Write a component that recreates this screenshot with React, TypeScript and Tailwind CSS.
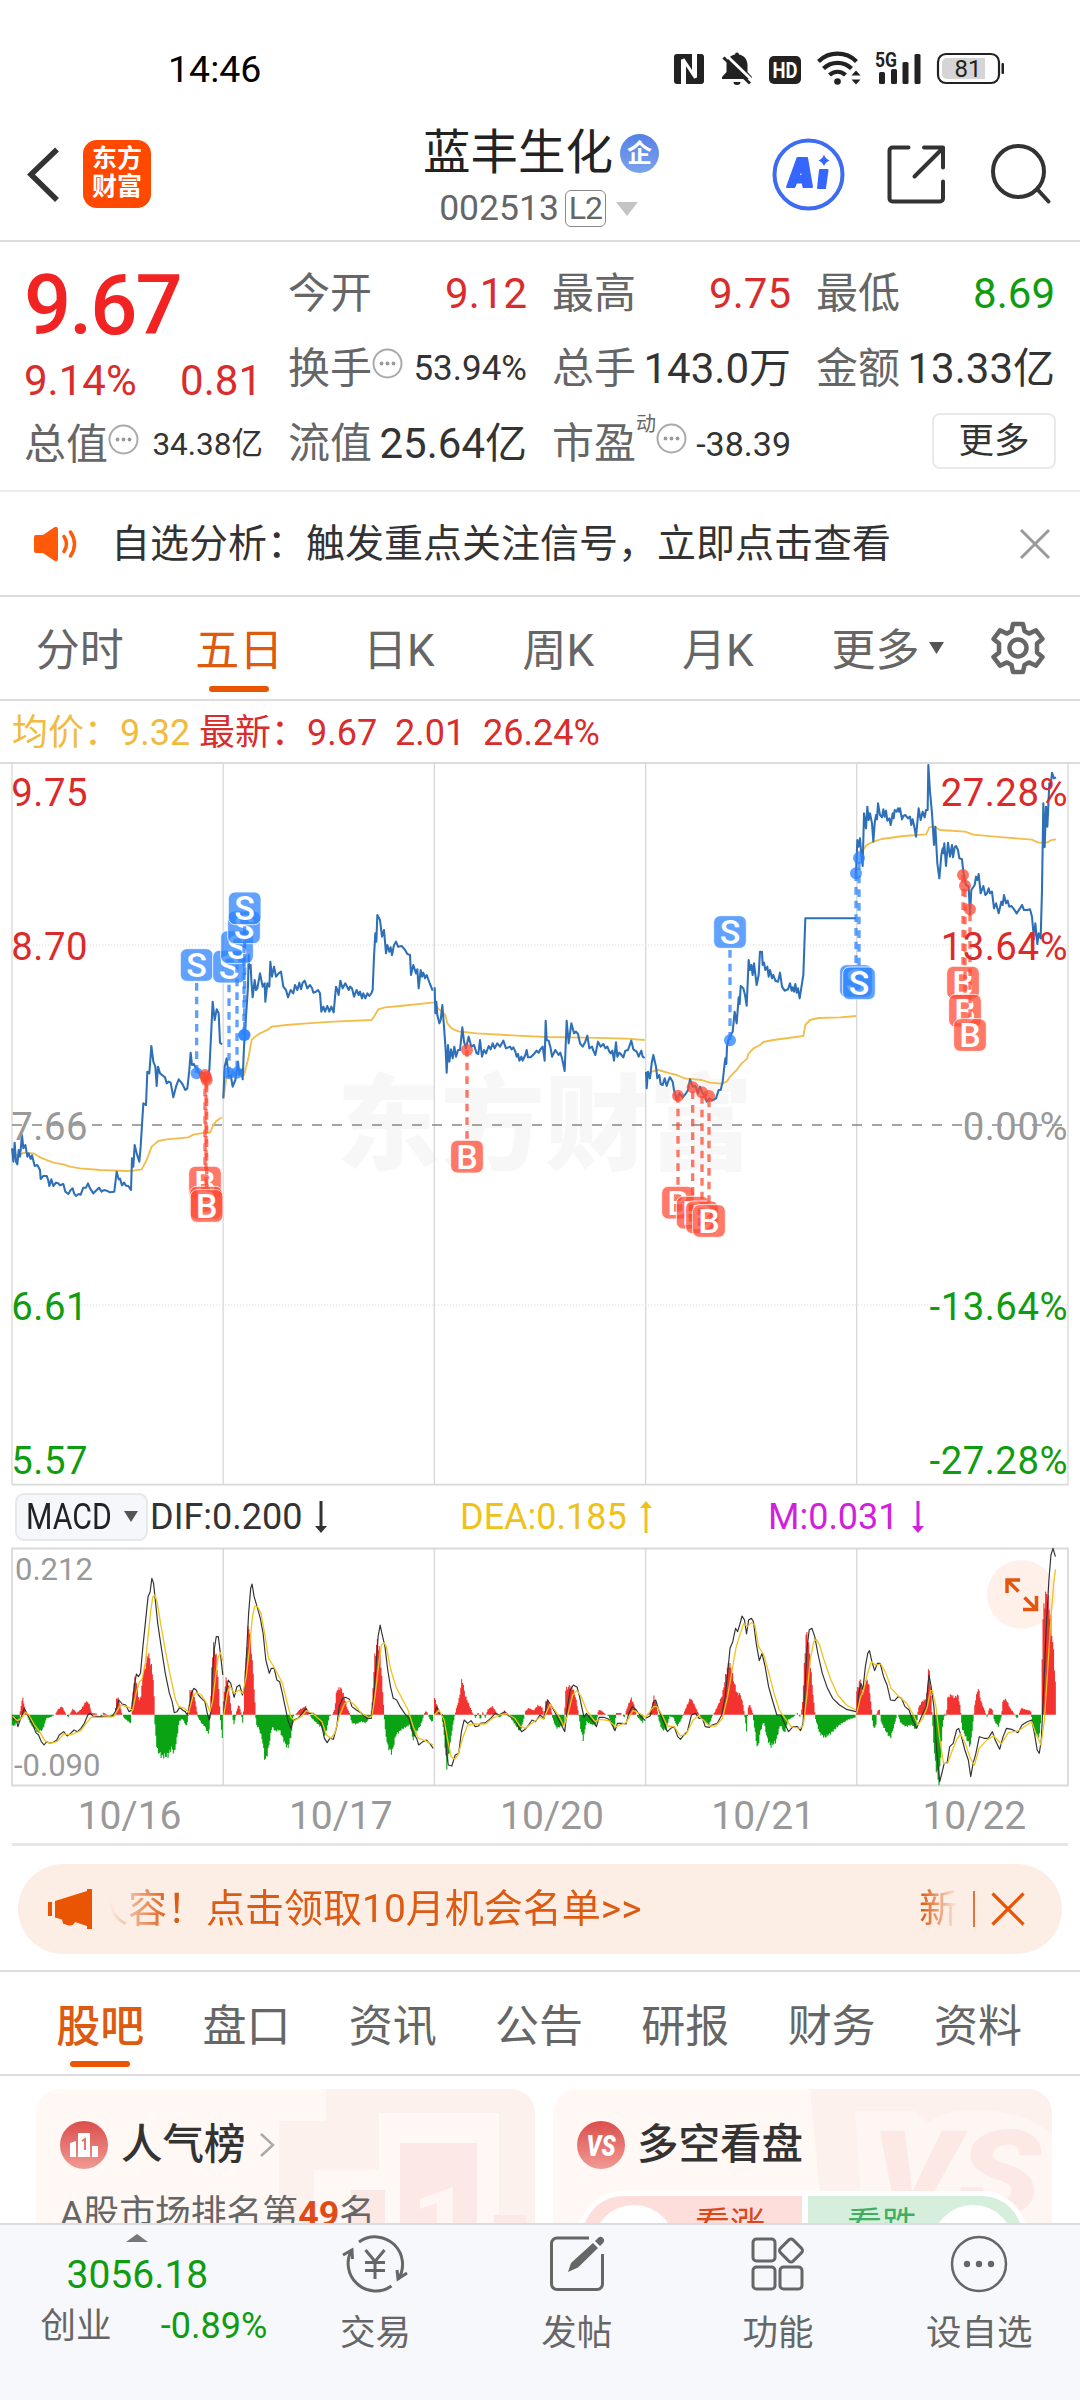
import type { ReactNode } from "react";
import clsx from "clsx";

type Point = [number, number];

// "x,y x,y ..." -> list of points
function parse(data: string): Point[] {
  return data
    .trim()
    .split(/\s+/)
    .map((p) => p.split(",").map(Number) as Point);
}

/* ---------------------------------- price chart data ---------------------------------- */

// One entry per trading day. Units are thirds of a pixel.
const PRICE_DAYS = [
  {
    dx: 0,
    dy: 0,
    price:
      "36,1165 40,1205 44,1148 48,1205 52,1213 56,1170 60,1190 66,1125 70,1165 76,1155 82,1190 86,1180 92,1197 96,1186 104,1218 112,1215 120,1230 122,1257 130,1248 140,1248 144,1258 148,1278 154,1258 160,1278 168,1268 175,1270 180,1276 190,1272 196,1295 205,1302 212,1290 218,1285 222,1300 228,1308 236,1302 242,1304 250,1283 258,1283 264,1270 270,1285 280,1300 290,1290 297,1283 305,1295 312,1290 320,1292 330,1297 343,1295 350,1235 356,1258 360,1256 366,1276 372,1268 378,1277 385,1278 393,1290 396,1195 400,1220 404,1155 410,1180 418,1205 422,1160 426,1095 430,1030 438,1035 442,935 448,940 454,858 460,905 466,920 470,978 474,920 480,940 490,948 495,952 500,970 506,965 512,968 520,1012 528,980 536,958 546,970 556,990 562,985 568,930 572,878 576,915 582,912 586,922 592,925 600,945 606,938 612,940 620,960 628,930 633,830 638,725 644,780 650,748 656,760 660,848 666,853",
    avg: "36,1185 60,1185 70,1178 100,1180 120,1192 135,1198 160,1208 190,1213 210,1220 240,1225 300,1230 380,1233 400,1232 425,1228 440,1200 455,1160 475,1143 500,1138 565,1132 580,1124 615,1118 630,1118 640,1095 650,1082 666,1072",
  },
  {
    dx: 0,
    dy: 0,
    price:
      "670,1015 674,920 680,895 686,950 692,945 698,980 706,960 714,905 718,945 724,930 728,958 732,860 738,770 744,680 746,585 748,625 752,615 754,660 758,712 764,660 768,690 772,685 780,640 788,680 794,670 796,725 802,670 808,680 811,605 816,650 822,620 828,650 836,640 843,635 850,680 858,690 864,712 872,690 880,700 885,675 892,690 898,668 903,688 908,668 914,662 922,685 930,675 936,684 940,698 948,695 954,690 960,700 964,755 970,740 975,755 982,738 988,755 994,740 1001,757 1008,680 1012,690 1016,705 1021,662 1028,685 1036,670 1046,690 1050,680 1056,685 1062,710 1070,690 1076,705 1080,695 1086,715 1090,700 1096,715 1102,700 1108,708 1114,700 1118,690 1122,590 1126,520 1129,545 1132,465 1140,480 1146,530 1152,510 1158,580 1162,555 1168,575 1172,562 1176,585 1182,555 1188,545 1194,560 1205,558 1214,568 1222,582 1230,585 1233,645 1240,615 1248,640 1252,628 1256,685 1262,630 1266,650 1270,638 1275,655 1280,645 1290,672 1298,692",
    avg: "670,1015 680,950 700,940 732,945 745,895 755,840 765,830 780,820 805,808 815,800 860,795 920,790 1000,785 1115,780 1125,765 1135,748 1155,742 1200,738 1303,727",
  },
  {
    dx: 1080,
    dy: 300,
    price:
      "224,382 226,460 229,425 232,465 238,490 242,480 247,435 252,500 257,570 260,638 264,555 268,605 273,568 278,595 283,560 288,590 294,570 300,570 307,502 312,545 318,565 326,530 334,560 342,555 350,580 355,582 360,540 366,590 372,570 378,580 386,558 392,568 398,550 404,565 412,550 420,560 430,542 438,565 450,560 455,568 460,562 466,575 470,590 474,582 478,602 484,590 488,602 496,585 500,570 504,592 512,592 522,582 530,572 536,578 540,570 548,560 554,602 557,482 560,540 566,542 572,565 576,590 586,570 596,585 601,578 606,595 614,633 620,482 626,550 634,490 642,520 648,515 654,522 660,550 668,560 676,545 682,527 688,565 696,560 700,572 706,585 714,545 722,560 730,552 736,565 742,560 748,575 752,580 757,572 762,602 768,547 772,590 778,578 782,582 790,592 796,572 804,570 814,542 820,568 830,575 836,590 844,572 848,590 854,594",
    avg: "224,425 234,445 256,465 262,490 275,505 295,514 350,520 470,527 560,531 680,533 800,536 854,540",
  },
  {
    dx: 1080,
    dy: 300,
    price:
      "858,635 860,685 864,635 870,655 875,610 880,585 888,620 892,655 898,645 902,672 908,675 914,655 920,678 926,660 930,652 938,665 942,690 950,720 958,700 968,712 978,700 984,690 990,658 998,680 1006,678 1014,700 1020,680 1028,700 1034,705 1040,725 1048,715 1056,722 1068,715 1076,690 1082,690 1088,665 1094,610 1096,595 1099,612 1101,560 1104,545 1112,525 1118,515 1124,455 1130,490 1136,412 1139,432 1142,378 1150,385 1155,405 1160,437 1166,300 1170,330 1174,315 1178,345 1182,310 1190,375 1196,345 1200,275 1206,275 1208,315 1212,308 1216,330 1222,320 1226,350 1230,330 1236,355 1240,345 1246,362 1254,365 1260,338 1266,380 1274,392 1284,388 1290,370 1295,392 1298,382 1302,395 1306,372 1310,398 1314,385 1319,415 1326,370 1330,345 1336,175 1488,175",
    avg: "858,660 875,635 895,630 930,640 950,645 975,655 1025,660 1050,668 1085,671 1100,665 1110,650 1130,630 1145,610 1162,595 1165,582 1180,565 1200,555 1210,546 1240,540 1330,528 1336,495 1350,480 1375,474 1440,472 1488,468",
  },
  {
    dx: 1920,
    dy: 0,
    price:
      "648,340 652,240 656,260 660,235 664,285 668,318 672,160 678,205 682,140 686,180 690,160 696,190 700,245 704,190 708,165 711,178 714,130 720,165 726,172 730,148 734,170 738,152 742,182 748,175 752,195 758,160 761,175 764,150 770,155 774,145 777,155 780,145 786,178 790,168 796,165 804,175 810,170 814,195 818,178 822,195 828,230 836,145 842,180 848,155 854,172 858,150 863,150 865,15 870,95 876,160 882,255 886,200 892,310 898,355 904,285 908,265 910,280 913,250 918,318 924,248 930,290 936,255 939,292 944,262 948,258 954,270 958,295 966,298 970,335 978,375 986,380 990,465 994,390 1004,375 1008,350 1012,360 1016,342 1022,400 1030,378 1036,405 1041,400 1046,385 1050,400 1056,395 1062,445 1068,430 1076,460 1084,425 1088,435 1092,405 1098,430 1103,422 1108,440 1114,438 1120,445 1130,460 1140,445 1146,435 1152,450 1162,450 1170,448 1176,470 1182,538 1186,490 1192,552 1196,520 1202,535 1206,390 1210,130 1214,262 1218,140 1222,200 1228,70 1232,80 1236,38 1242,55 1248,52",
    avg: "648,275 665,275 680,255 700,245 725,237 790,228 858,223 868,203 880,198 900,210 975,215 1000,224 1090,232 1175,239 1195,248 1220,248 1235,240 1248,238",
  },
];

type Trade = { side: "S" | "B"; x: number; box: number; dot: number };

const TRADES: Trade[] = [
  { side: "S", x: 590, box: 615, dot: 940 },
  { side: "S", x: 687, box: 620, dot: 940 },
  { side: "S", x: 711, box: 561, dot: 938 },
  { side: "S", x: 732, box: 502, dot: 825 },
  { side: "S", x: 734, box: 445, dot: 825 },
  { side: "B", x: 615, box: 1268, dot: 945 },
  { side: "B", x: 618, box: 1328, dot: 952 },
  { side: "B", x: 620, box: 1338, dot: 960 },
  { side: "B", x: 1401, box: 1190, dot: 870 },
  { side: "S", x: 2190, box: 516, dot: 841 },
  { side: "B", x: 2034, box: 1328, dot: 1007 },
  { side: "B", x: 2078, box: 1358, dot: 982 },
  { side: "B", x: 2106, box: 1372, dot: 997 },
  { side: "B", x: 2127, box: 1383, dot: 1008 },
  { side: "S", x: 2568, box: 663, dot: 340 },
  { side: "S", x: 2577, box: 670, dot: 294 },
  { side: "B", x: 2889, box: 668, dot: 345 },
  { side: "B", x: 2895, box: 752, dot: 377 },
  { side: "B", x: 2910, box: 825, dot: 448 },
];

const DAY_LINES = [36, 669.5, 1303, 1937, 2570, 3204];

/* ---------------------------------- MACD data ---------------------------------- */

const MACD_DAYS = [
  {
    dx: 0,
    dif: "36,705 40,720 46,712 52,740 58,722 64,705 70,685 78,700 86,715 96,735 104,758 112,765 120,785 128,795 136,785 145,790 155,787 165,780 172,765 185,755 195,768 205,760 215,750 225,755 235,745 245,730 255,705 262,700 270,708 290,710 310,708 325,710 335,695 345,660 355,672 365,675 375,695 382,690 390,620 396,582 402,590 408,580 415,500 422,430 430,350 436,335 441,295 446,310 450,350 458,430 468,500 480,580 492,640 500,665 506,698 514,695 522,682 530,690 538,695 544,705 550,680 556,640 563,625 570,630 576,645 585,655 595,665 602,700 608,720 613,690 617,580 622,510 628,470 634,470 640,520 647,585",
    dea: "36,708 50,722 62,715 74,697 84,705 100,735 115,755 130,782 145,790 165,785 185,762 205,765 235,752 250,730 265,712 290,712 330,710 350,675 375,682 385,692 395,640 405,605 412,600 422,550 430,470 438,390 444,350 450,345 456,365 468,440 480,510 495,590 510,660 520,680 535,685 548,697 560,650 570,638 585,645 600,670 610,695 618,660 626,590 634,530 640,518 647,542",
    hist: "36,-30 42,-35 48,-20 55,-25 60,20 66,52 72,20 80,-5 90,-30 100,-40 112,-55 125,-42 135,-10 145,-8 160,0 168,15 180,25 190,5 198,-8 205,5 212,18 222,5 235,15 250,40 258,35 266,5 280,3 295,-4 300,6 312,0 325,-4 334,-5 338,50 345,48 352,10 360,-10 372,-20 380,-25 384,40 390,110 396,100 404,40 410,60 416,130 424,150 430,185 438,155 446,100 450,-30 456,-105 470,-125 488,-122 498,-100 506,-115 514,-70 520,-20 530,-12 542,-35 547,0 552,75 560,70 568,35 574,-5 585,-25 595,-35 606,-60 611,0 616,170 621,210 628,170 634,100 640,-10 647,-90",
  },
  {
    dx: 0,
    dif: "650,700 656,640 663,600 670,610 680,652 688,620 696,615 704,645 710,625 716,520 722,400 728,325 732,312 738,350 748,385 756,415 764,460 772,540 782,580 788,565 796,565 804,600 812,605 820,640 828,680 836,720 845,745 852,720 865,715 878,700 888,685 898,700 910,700 925,715 935,740 942,775 950,788 958,775 968,778 978,740 985,680 995,655 1003,652 1015,658 1022,680 1035,690 1050,700 1065,715 1078,715 1085,650 1092,560 1098,470 1104,435 1110,465 1118,500 1126,570 1134,620 1142,655 1152,660 1162,680 1175,700 1188,715 1200,760 1210,775 1216,795 1228,785 1238,780 1248,790 1258,805",
    dea: "650,705 660,640 668,618 680,640 695,630 705,640 715,590 725,500 733,410 740,378 748,380 758,400 770,470 780,535 792,555 808,585 820,610 832,660 845,712 855,722 875,710 890,692 910,702 935,725 948,765 960,775 972,760 985,710 1000,672 1015,662 1030,675 1050,700 1070,712 1080,710 1090,640 1100,550 1108,495 1115,488 1122,500 1135,570 1150,620 1165,650 1185,690 1200,740 1215,775 1235,782 1258,795",
    hist: "649,40 656,110 664,85 672,10 680,-30 688,15 694,30 700,5 706,-30 710,80 716,190 722,275 730,200 738,80 744,-30 752,-40 762,-75 770,-140 778,-110 790,-35 800,-50 812,-45 825,-80 836,-100 846,-60 852,-5 862,5 870,15 888,25 896,5 905,-10 920,-25 935,-40 942,-65 950,-40 956,-5 965,0 972,15 978,75 990,80 998,60 1008,20 1015,5 1022,-25 1035,-28 1050,-20 1062,-25 1075,-8 1080,20 1088,170 1096,220 1104,180 1112,60 1118,-40 1126,-95 1138,-115 1150,-60 1165,-45 1190,-30 1200,-75 1210,-50 1222,-30 1230,-5 1235,10 1240,8 1245,-5 1252,-20 1258,-18",
  },
  {
    dx: 0,
    dif: "1262,700 1268,680 1276,700 1285,705 1292,740 1297,820 1302,855 1312,858 1322,825 1332,820 1340,755 1348,720 1358,730 1368,722 1380,740 1390,738 1395,730 1410,728 1425,715 1438,700 1450,705 1465,695 1478,708 1495,715 1505,740 1515,755 1525,748 1535,735 1545,720 1555,725 1568,705 1580,715 1590,660 1600,675 1613,700 1628,730 1640,755 1648,680 1656,630 1665,615 1676,622 1683,650 1696,712 1703,700 1713,715 1723,725 1732,740 1740,712 1753,712 1768,718 1778,735 1786,752 1793,730 1808,730 1818,732 1826,700 1836,680 1848,690 1860,708 1874,722",
    dea: "1262,705 1275,690 1290,720 1300,780 1310,830 1320,838 1330,825 1345,770 1358,735 1380,732 1410,732 1430,715 1450,705 1470,700 1495,715 1510,738 1525,745 1545,730 1568,712 1578,718 1598,672 1618,700 1638,738 1650,700 1663,645 1676,632 1688,650 1703,690 1728,725 1743,718 1768,722 1788,740 1818,728 1838,692 1858,700 1874,712",
    hist: "1262,50 1270,25 1276,10 1283,-5 1290,-60 1297,-160 1305,-110 1312,-50 1320,-5 1326,20 1334,50 1342,110 1350,60 1362,30 1372,5 1382,-10 1388,8 1395,-15 1402,8 1410,-10 1416,15 1430,25 1440,10 1448,-8 1456,-5 1465,12 1472,5 1480,-5 1490,-20 1500,-35 1510,-50 1518,-25 1526,10 1535,20 1550,12 1562,28 1568,25 1576,20 1580,-20 1584,40 1592,45 1600,20 1606,-15 1616,-40 1628,-35 1638,-30 1643,75 1653,85 1663,80 1672,50 1680,5 1686,-40 1694,-75 1703,-20 1718,-30 1731,-30 1738,15 1746,12 1754,5 1768,-5 1783,-45 1790,5 1803,5 1813,-8 1823,25 1833,50 1843,25 1850,-5 1868,-25",
  },
  {
    dx: 1568,
    dif: "307,715 320,708 330,665 336,660 345,690 355,715 370,755 380,745 390,740 400,770 408,778 418,765 428,755 440,705 452,700 462,715 472,715 480,740 492,742 500,735 515,730 528,705 538,650 545,580 552,505 560,485 568,445 574,455 580,435 587,408 594,420 600,462 606,420 614,415 620,425 628,490 637,542 645,520 654,560 664,620 675,660 688,705 700,705 710,730 722,755 735,740 748,740 757,752 764,730 770,620 776,500 782,450 790,445 798,470 808,525 820,580 835,625 850,655 870,675 890,688 918,695",
    dea: "307,712 330,680 340,680 355,705 370,738 390,740 408,768 425,762 445,720 460,708 475,720 492,738 510,738 530,715 545,650 558,570 570,500 582,460 592,430 602,440 614,428 624,435 635,500 650,525 665,580 680,640 695,690 712,715 730,740 755,745 765,735 775,650 785,540 795,485 803,478 812,495 825,540 845,600 865,645 890,675 918,690",
    hist: "308,0 318,5 325,20 331,55 338,30 345,-15 355,-45 366,-45 376,-5 388,-8 398,-35 410,-15 418,5 426,25 437,50 446,35 455,15 465,-5 480,-25 492,-30 500,-5 508,8 518,30 530,60 540,120 548,155 555,140 562,105 572,65 582,60 590,30 596,-15 600,-50 604,20 610,30 618,5 622,-30 632,-105 640,-50 650,-20 660,-70 670,-95 685,-80 698,-30 710,-55 722,-15 738,-5 748,5 756,-8 762,25 768,150 773,245 780,215 788,120 796,30 800,-10 812,-55 828,-68 845,-55 870,-30 895,-15 916,-8",
  },
  {
    dx: 1568,
    dif: "920,700 926,640 932,610 938,628 945,560 952,520 957,512 964,545 972,572 980,550 988,550 998,590 1008,615 1018,660 1030,662 1040,650 1050,655 1060,680 1072,690 1082,720 1094,745 1102,725 1112,700 1122,680 1126,620 1130,585 1136,620 1144,680 1150,780 1156,860 1161,905 1166,885 1174,850 1182,850 1190,800 1200,790 1210,750 1216,745 1224,770 1234,810 1244,840 1251,890 1258,850 1266,820 1276,770 1290,775 1302,775 1314,755 1322,780 1335,808 1345,770 1355,745 1370,748 1388,758 1400,735 1415,725 1428,720 1436,760 1444,810 1450,820 1456,780 1464,600 1470,450 1478,300 1484,225 1490,205 1497,230",
    dea: "920,700 930,655 940,630 950,585 962,545 975,555 990,552 1005,580 1020,625 1045,652 1065,670 1085,705 1098,735 1112,715 1125,680 1134,632 1140,632 1150,680 1160,770 1172,850 1184,850 1198,810 1212,775 1222,762 1235,790 1250,835 1262,855 1275,805 1300,778 1318,768 1340,792 1360,758 1390,752 1410,738 1428,725 1440,760 1455,795 1465,720 1475,560 1485,400 1492,310 1497,268",
    hist: "920,70 930,105 938,60 946,100 954,100 962,30 967,-35 975,-40 979,10 986,15 992,-25 1005,-50 1018,-70 1028,-35 1038,5 1048,-25 1062,-35 1080,-30 1092,-45 1099,20 1110,40 1120,45 1125,70 1129,150 1135,70 1140,-20 1146,-120 1152,-170 1159,-205 1164,-120 1170,-20 1177,5 1180,-8 1184,50 1194,60 1204,50 1214,60 1221,20 1226,-40 1238,-70 1250,-95 1257,-30 1264,40 1273,80 1281,40 1290,15 1298,-8 1306,20 1314,15 1320,-20 1332,-35 1340,-5 1345,45 1354,45 1365,20 1376,5 1386,-12 1398,20 1410,15 1425,12 1431,-25 1440,-60 1450,-65 1456,0 1460,280 1468,360 1476,340 1484,280 1492,180 1498,70",
  },
];

const MACD_ZERO = 704;
const BAR_STEP = 2.54;

// Interpolates the histogram keys into one bar per minute
function barPath(hist: string, positive: boolean) {
  const keys = parse(hist);
  let d = "";
  let k = 0;
  let i = 0;
  for (let x = keys[0][0]; x <= keys[keys.length - 1][0]; x += BAR_STEP) {
    while (k < keys.length - 2 && keys[k + 1][0] < x) k++;
    const [x0, v0] = keys[k];
    const [x1, v1] = keys[k + 1];
    const wobble = 1 + Math.sin(i * 2.3) * 0.07;
    const v = (v0 + ((v1 - v0) * (x - x0)) / (x1 - x0)) * wobble;
    i++;
    if (v > 0 !== positive || Math.abs(v) < 2) continue;
    d += `M${x.toFixed(1)} ${MACD_ZERO}V${(MACD_ZERO - v).toFixed(1)}`;
  }
  return d;
}

/* ---------------------------------- components ---------------------------------- */

function StatusBar() {
  return (
    <div className="flex h-[116px] items-start justify-between pl-[168px] pr-[74px] pt-[50px]">
      <span className="text-[37.500px] leading-[38px] text-black">14:46</span>
      <svg className="h-[36px] w-[334px]" viewBox="672 50 334 36" fill="#222">
        {/* NFC */}
        <rect x="674" y="54" width="30" height="30" rx="3" />
        <path d="M681 84V59.500h2.500L686 63v21zM697 54v23.500h-2.500L692 74V54z" fill="#fff" />
        <path d="M683 59l12.500 19" stroke="#fff" strokeWidth="3" />
        {/* muted bell */}
        <path d="M737 52.500a2 2 0 0 1 2 2c5 1 8.500 5 8.500 10.500v7l4.500 5v2h-30v-2l4.500-5v-7c0-5.500 3.500-9.500 8.500-10.500a2 2 0 0 1 2-2zM733.500 82h7a3.500 3 0 0 1-7 0z" />
        <path d="M726 55l28 27" stroke="#fff" strokeWidth="3" />
        <path d="M723.500 57.500l26.500 26" stroke="#222" strokeWidth="3" />
        {/* HD */}
        <rect x="769" y="56" width="32" height="28" rx="5" />
        <text x="785" y="78" fontSize="22" fontWeight="700" textAnchor="middle" fill="#fff" textLength="25" lengthAdjust="spacingAndGlyphs">
          HD
        </text>
        {/* wifi */}
        <g fill="none" stroke="#222" strokeWidth="4.200">
          <path d="M818.500 61.500a27 27 0 0 1 38 0" />
          <path d="M823.500 68.500a20 20 0 0 1 28 0" />
          <path d="M829.500 75a11.500 11.500 0 0 1 16 0" />
        </g>
        <circle cx="837.500" cy="81.500" r="3.300" />
        <path d="M851.500 75.500l4.500-5 4.500 5zM851.500 79.500l4.500 5 4.500-5z" />
        {/* 5G bars */}
        <text x="875" y="66.500" fontSize="20.500" fontWeight="700" textLength="22" lengthAdjust="spacingAndGlyphs">
          5G
        </text>
        <rect x="879" y="72" width="6" height="12" rx="1.500" />
        <rect x="891" y="69" width="6" height="15" rx="1.500" />
        <rect x="902.500" y="62" width="6" height="22" rx="1.500" />
        <rect x="914.500" y="54" width="6" height="30" rx="1.500" />
        {/* battery */}
        <rect x="938" y="54" width="61" height="29" rx="8" fill="#fff" stroke="#222" strokeWidth="2.200" />
        <path d="M947 58h38v21h-38a5 5 0 0 1-5-5V63a5 5 0 0 1 5-5z" fill="#d5d5d5" />
        <rect x="1001.500" y="63" width="2.500" height="11" rx="1" />
        <text x="968" y="77" fontSize="24" textAnchor="middle">
          81
        </text>
      </svg>
    </div>
  );
}

function Header() {
  return (
    <header className="flex h-[126px] items-start border-b-2 border-[#dcdcdc]">
      <div className="flex w-[380px] items-center pl-[24px] pt-[24px]">
        <svg className="h-[68px] w-[40px]" viewBox="24 140 40 68" fill="none" stroke="#333" strokeWidth="5.500">
          <path d="M57 149.500L31 174.500l26 25.500" />
        </svg>
        <div className="ml-[19px] flex size-[68px] flex-col items-center justify-center rounded-[14px] bg-[#ff4800] pb-[2px] text-[25px] font-bold leading-[28px] text-white">
          <span>东方</span>
          <span>财富</span>
        </div>
      </div>

      <div className="flex w-[322px] flex-col items-center pt-[8px]">
        <div className="flex items-center">
          <span className="text-[47.500px] leading-[58px] text-[#222]">蓝丰生化</span>
          <span className="ml-[7px] flex size-[39px] items-center justify-center rounded-full bg-linear-to-b from-[#5681e6] to-[#7ba3ea] text-[25px] font-bold leading-none text-white">
            企
          </span>
        </div>
        <div className="mt-[8px] flex items-center text-[35.500px] leading-[37px] text-[#666]">
          002513
          <span className="ml-[6px] flex h-[37px] w-[41px] items-center justify-center rounded-[6px] border-[1.500px] border-[#888] text-[32px] tracking-[-1px]">
            L2
          </span>
          <svg className="ml-[9px] mr-[4px] h-[14px] w-[24px]" viewBox="0 0 24 14">
            <path d="M1 0h22L12 14z" fill="#c4c4c4" />
          </svg>
        </div>
      </div>

      <svg className="ml-[66px] mt-[20px] h-[76px] w-[290px]" viewBox="768 136 290 76" fill="none" stroke="#333" strokeWidth="4" strokeLinecap="round" strokeLinejoin="round">
        {/* AI assistant */}
        <circle cx="808.500" cy="174.500" r="34" stroke="#3d6bf2" />
        <g fill="#3566ff" stroke="#3566ff" strokeWidth="2" fillRule="evenodd">
          <path d="M787 187l10.500-29h9.500l5 29h-8.500l-.8-4.500h-6.500l-1.700 4.500zM798.500 176h4l-.8-7.500z" />
          <path d="M820 170h7.500l-2.500 18h-7z" />
        </g>
        <path d="M824 154.500q1.500 4.500 5.500 6q-4 1.500-5.500 5.500q-1.500-4-5.500-5.500q4-1.500 5.500-6z" fill="#3566ff" stroke="none" />
        {/* share */}
        <path d="M908.500 147.500h-16a3 3 0 0 0-3 3v48a3 3 0 0 0 3 3h47.500a3 3 0 0 0 3-3v-17M924 147.500h19v20M942 149l-27.500 27.500" />
        {/* search */}
        <circle cx="1018.500" cy="171.500" r="25.500" />
        <path d="M1038 190l10.500 11.500" />
      </svg>
    </header>
  );
}

function InfoDot() {
  return (
    <svg className="h-[31px] w-[31px] shrink-0 -translate-y-[5px]" viewBox="0 0 31 31" fill="#999">
      <circle cx="15.500" cy="15.500" r="14" fill="none" stroke="#aaa" strokeWidth="2" />
      <circle cx="9.500" cy="15.500" r="1.900" />
      <circle cx="15.500" cy="15.500" r="1.900" />
      <circle cx="21.500" cy="15.500" r="1.900" />
    </svg>
  );
}

function Cell({ label, value, info, tone = "text-[#333]", size = "text-[42px]", sup }: {
  label: string;
  value: string;
  info?: boolean;
  tone?: string;
  size?: string;
  sup?: string;
}) {
  return (
    <div className="flex h-[75px] items-center justify-between whitespace-nowrap leading-[50px]">
      <span className="flex items-center text-[42px] text-[#666]">
        {label}
        {sup && <span className="w-[20px] -translate-y-[20px] text-[20px]">{sup}</span>}
        {info && <InfoDot />}
      </span>
      <span className={clsx(size, tone)}>{value}</span>
    </div>
  );
}

function Quote() {
  return (
    <section className="grid h-[250px] grid-cols-[239px_239px_239px_239px] gap-x-[25px] border-b-2 border-[#ececec] pl-[24px] pt-[14px]">
      <div>
        <div className="flex h-[99px] items-center text-[83px] font-medium leading-none tracking-[-2px] text-[#f12323]">9.67</div>
        <div className="flex h-[52px] items-center justify-between pr-[1px] text-[42px] leading-none text-[#d92c2c]">
          <span>9.14%</span>
          <span>0.81</span>
        </div>
        <Cell label="总值" value="34.38亿" info size="text-[31.500px]" />
      </div>
      <div>
        <Cell label="今开" value="9.12" tone="text-[#d92c2c]" />
        <Cell label="换手" value="53.94%" info size="text-[35px]" />
        <Cell label="流值" value="25.64亿" />
      </div>
      <div>
        <Cell label="最高" value="9.75" tone="text-[#d92c2c]" />
        <Cell label="总手" value="143.0万" />
        <Cell label="市盈" value="-38.39" sup="动" info size="text-[34px]" />
      </div>
      <div>
        <Cell label="最低" value="8.69" tone="text-[#109c10]" />
        <Cell label="金额" value="13.33亿" />
        <div className="flex h-[75px] items-center justify-end">
          <button className="mr-[-1px] mt-[-6px] h-[56px] w-[124px] rounded-[8px] border-2 border-[#e9e9e9] text-[35.500px] leading-[50px] text-[#333]">
            更多
          </button>
        </div>
      </div>
    </section>
  );
}

function Notice() {
  return (
    <div className="flex h-[105px] items-center border-b-2 border-[#dcdcdc] pl-[33px] pr-[29px]">
      <svg className="h-[36px] w-[46px]" viewBox="0 0 46 36">
        <path d="M1 11q0-2 2-2h7L21 1.500q4-2 4 2v29q0 4-4 2L10 27H3q-2 0-2-2z" fill="#ff5a0a" />
        <path d="M31 10.500q5 7.500 0 15" fill="none" stroke="#ff5a0a" strokeWidth="3.500" strokeLinecap="round" />
        <path d="M37.500 6q8 12 0 24" fill="none" stroke="#ff5a0a" strokeWidth="3.500" strokeLinecap="round" />
      </svg>
      <span className="ml-[32px] whitespace-nowrap text-[39px] leading-[50px] text-[#333]">
        自选分析：触发重点关注信号，立即点击查看
      </span>
      <svg className="ml-auto h-[32px] w-[32px]" viewBox="0 0 32 32" fill="none" stroke="#999" strokeWidth="3">
        <path d="M2 2l28 28M30 2L2 30" />
      </svg>
    </div>
  );
}

function ChartTabs() {
  const tabs = ["分时", "五日", "日K", "周K", "月K"];
  return (
    <nav className="flex h-[104px] border-b-2 border-[#dcdcdc] text-[44px] text-[#666]">
      {tabs.map((tab) => (
        <div key={tab} className="flex w-[159.500px] flex-col items-center pt-[22px]">
          <span className={clsx("leading-[64px]", tab === "五日" && "text-[#dd5a0e]")}>{tab}</span>
          {tab === "五日" && <span className="mt-[3px] h-[6px] w-[60px] rounded-full bg-[#ea5504]" />}
        </div>
      ))}
      <div className="flex items-start pl-[34px] pt-[22px]">
        <span className="leading-[64px]">更多</span>
        <svg className="ml-[9px] mt-[23px] h-[12px] w-[15px]" viewBox="0 0 15 12">
          <path d="M0 0h15L7.500 12z" fill="#555" />
        </svg>
      </div>
      <svg className="ml-auto mr-[34px] mt-[24px] h-[54px] w-[56px]" viewBox="-28 -27 56 54" fill="none" stroke="#666" strokeWidth="4.500" strokeLinejoin="round">
        <path d="M-5-24h10l1.500 7 4.500 2.600 7-3.300 6.500 8.700-5.500 4.500v9l5.500 4.500-6.500 8.700-7-3.300L6.500 17 5 24H-5l-1.500-7-4.500-2.600-7 3.300-6.500-8.700 5.500-4.500v-9l-5.500-4.500 6.500-8.700 7 3.300 4.500-2.600z" />
        <circle r="8.500" />
      </svg>
    </nav>
  );
}

function Legend() {
  return (
    <div className="flex h-[63px] items-center whitespace-nowrap border-b-2 border-[#dcdcdc] pl-[12px] pt-[3px] text-[36px] text-[#d92c2c]">
      <span className="text-[#f0bb3f]">均价：</span>
      <span className="w-[79px] text-[#f0bb3f]">9.32</span>
      <span>最新：</span>
      <span className="w-[88px]">9.67</span>
      <span className="w-[88px]">2.01</span>
      <span>26.24%</span>
    </div>
  );
}

function TradeMark({ side, x, box, dot }: Trade) {
  const color = side === "S" ? "#2a81ff" : "#ff4a34";
  const edge = box < dot ? box + 54 : box - 54;
  return (
    <g>
      <path d={`M${x} ${edge}V${dot}`} stroke={color} strokeOpacity=".75" strokeWidth="10" strokeDasharray="23 18" />
      <circle cx={x} cy={dot} r="18" fill={color} fillOpacity=".75" />
      <rect x={x - 49} y={box - 49} width="98" height="98" rx="20" fill={color} fillOpacity=".74" stroke="#fff" strokeOpacity=".8" strokeWidth="3" />
      <text x={x} y={box + 36} fontSize="102" fontWeight="500" textAnchor="middle" fill="#fff">
        {side}
      </text>
    </g>
  );
}

function PriceChart() {
  return (
    <svg className="block h-[722px] w-full" viewBox="0 12 3240 2166" fill="none">
      <text x="1010" y="1206" fontSize="312" fontWeight="900" fill="#f7f7f7">
        东方财富
      </text>
      {/* grid */}
      <g stroke="#d9d9d9" strokeWidth="4">
        {DAY_LINES.map((x) => (
          <path key={x} d={`M${x} 12V2174`} />
        ))}
        <path d="M36 2174H3206" strokeWidth="5" />
      </g>
      <path d="M36 555H3204M36 1635H3204" stroke="#dedede" strokeWidth="3" strokeDasharray="4 5" />
      <path d="M36 1095H3204" stroke="#888" strokeWidth="5" strokeDasharray="30 30" />

      <g strokeLinejoin="round">
        {PRICE_DAYS.map((day, i) => (
          <g key={i} transform={`translate(${day.dx} ${day.dy})`}>
            <polyline points={day.avg} stroke="#f3bd4c" strokeWidth="5.500" />
            <polyline points={day.price} stroke="#2e70b8" strokeWidth="6.200" />
          </g>
        ))}
      </g>

      {TRADES.map((trade, i) => (
        <TradeMark key={i} {...trade} />
      ))}

      <g fontSize="115" letterSpacing="1.500">
        <g fill="#dc2a2a">
          <text x="34" y="137">9.75</text>
          <text x="34" y="599">8.70</text>
          <text x="3204" y="137" textAnchor="end">27.28%</text>
          <text x="3204" y="599" textAnchor="end">13.64%</text>
        </g>
        <g fill="#999">
          <text x="34" y="1139">7.66</text>
          <text x="3204" y="1139" textAnchor="end">0.00%</text>
        </g>
        <g fill="#109c10">
          <text x="34" y="1681">6.61</text>
          <text x="34" y="2142">5.57</text>
          <text x="3204" y="1681" textAnchor="end">-13.64%</text>
          <text x="3204" y="2142" textAnchor="end">-27.28%</text>
        </g>
      </g>
    </svg>
  );
}

function Arrow({ up }: { up?: boolean }) {
  return (
    <svg className={clsx("ml-[13px] h-[32px] w-[12px]", up && "rotate-180")} viewBox="0 0 12 32" fill="currentColor">
      <path d="M4.500 0h3v25H12l-6 7-6-7h4.500z" />
    </svg>
  );
}

function MacdHeader() {
  return (
    <div className="flex h-[61px] items-center pl-[15px] text-[36px] leading-none">
      <div className="flex h-[48px] w-[133px] items-center rounded-[9px] border-2 border-[#e6e8ec] bg-[#f6f7fa] pl-[9px] text-[#222]">
        <span className="inline-block w-[98px] origin-left scale-x-[.84]">MACD</span>
        <svg className="h-[11px] w-[14px]" viewBox="0 0 14 11">
          <path d="M0 0h14L7 11z" fill="#555" />
        </svg>
      </div>
      <span className="flex w-[312px] items-center pl-[2px] text-[#333]">
        DIF:0.200
        <Arrow />
      </span>
      <span className="flex w-[308px] items-center text-[#efc21a]">
        DEA:0.185
        <Arrow up />
      </span>
      <span className="flex items-center text-[#d21fdc]">
        M:0.031
        <Arrow />
      </span>
    </div>
  );
}

function MacdChart() {
  return (
    <svg className="block h-[240px] w-full" viewBox="0 67 1080 240" fill="none">
      <g stroke="#dadada" strokeWidth="1.500">
        <path d="M12 68.500H1068V305.500H12Z" strokeWidth="1.800" />
        <path d="M223.200 68V305M434.400 68V305M645.600 68V305M856.800 68V305" />
      </g>
      <circle cx="1021.500" cy="114.500" r="34.500" fill="#fff1ea" />
      <g fontSize="31" fill="#999">
        <text x="15" y="100">0.212</text>
        <text x="14" y="295.500">-0.090</text>
      </g>
      <g transform="scale(.34435 .33333)">
        {MACD_DAYS.map((day, i) => (
          <g key={i} transform={`translate(${day.dx} 0)`} strokeLinejoin="round">
            <path d={barPath(day.hist, true)} stroke="#f23330" strokeWidth="3.200" />
            <path d={barPath(day.hist, false)} stroke="#0aa314" strokeWidth="3.200" />
            <polyline points={day.dif} stroke="#333" strokeWidth="3.400" />
            <polyline points={day.dea} stroke="#efc320" strokeWidth="3.800" />
          </g>
        ))}
      </g>
      {/* expand */}
      <g stroke="#e2560d" strokeWidth="3.500">
        <path d="M1007 113V100H1020M1006.500 99.500l12 12" />
        <path d="M1023 129.500H1036.500V116M1036.500 129.500l-12-12" />
      </g>
    </svg>
  );
}

function Dates() {
  return (
    <div className="mx-[12px] flex h-[59px] items-center border-b-[3px] border-[#e6e6e6] pl-[12px] pt-[2px] text-[39px] leading-none text-[#999]">
      {["10/16", "10/17", "10/20", "10/21", "10/22"].map((d) => (
        <span key={d} className="w-[211.200px] shrink-0 text-center">
          {d}
        </span>
      ))}
    </div>
  );
}

function Banner() {
  return (
    <div className="border-b-2 border-[#dcdcdc] px-[18px] pb-[16px] pt-[18px]">
      <div className="flex h-[90px] items-center rounded-full bg-[#fceee5] pl-[29px] text-[39px] leading-[50px] text-[#dc5a12]">
        <svg className="h-[40px] w-[46px]" viewBox="0 0 46 40" fill="#ea5504">
          <path d="M1 13h4v14H1zM8 12L40 2v-2h5v40h-5v-3l-12-4q-2 5-8 3l-4-1.500-1-4-7-2z" />
        </svg>
        <div className="ml-[16px] flex w-[849px] justify-between overflow-hidden whitespace-nowrap mask-[linear-gradient(to_right,transparent,black_60px,black_812px,transparent)]">
          <span className="-ml-[20px]">人容！点击领取10月机会名单&gt;&gt;</span>
          <span>新</span>
        </div>
        <span className="ml-[15px] h-[36px] w-[2px] bg-[#e0763c]" />
        <svg className="ml-[16px] h-[34px] w-[34px]" viewBox="0 0 34 34" fill="none" stroke="#ea5504" strokeWidth="3.200">
          <path d="M1.500 1.500l31 31M32.500 1.500l-31 31" />
        </svg>
      </div>
    </div>
  );
}

function SectionTabs() {
  const tabs = ["股吧", "盘口", "资讯", "公告", "研报", "财务", "资料"];
  return (
    <nav className="flex h-[104px] border-b-2 border-[#dcdcdc] pl-[27px] text-[44px] text-[#666]">
      {tabs.map((tab, i) => (
        <div key={tab} className="flex w-[146.300px] flex-col items-center pt-[23px]">
          <span className={clsx("leading-[64px]", i === 0 && "font-medium text-[#dd5a0e]")}>{tab}</span>
          {i === 0 && <span className="mt-[2px] h-[6px] w-[60px] rounded-full bg-[#ea5504]" />}
        </div>
      ))}
    </nav>
  );
}

function Cards() {
  return (
    <div className="flex h-[147px] gap-[18px] overflow-hidden px-[36px] pt-[13px]">
      <div className="relative h-[300px] w-[499px] shrink-0 overflow-hidden rounded-[24px] bg-[#fff8f5] px-[24px]">
        <svg className="absolute left-0 top-0 h-[136px] w-full" viewBox="0 0 499 136">
          <path d="M290 0H499V136H463V24H343V81H278V136H243V32H290z" fill="#fdf1ee" />
          <path d="M364 54h77v82h-77zM315 101h34v35h-34zM458 126h32v10h-32z" fill="#fce8e5" />
          <path d="M384 110l33-12v38h-16v-22l-17 6z" fill="#fff5f2" />
        </svg>
        <div className="relative flex h-[112px] items-center">
          <svg className="size-[48px]" viewBox="-24 -24 48 48">
            <defs>
              <linearGradient id="rank" x1="0" y1="0" x2="0" y2="1">
                <stop offset="0" stopColor="#da4f4b" />
                <stop offset="1" stopColor="#f19a95" />
              </linearGradient>
            </defs>
            <circle r="24" fill="url(#rank)" />
            <path d="M-14-2l6-2V12h-6zM-6-12H6V12H-6zM8 1h6V12H8z" fill="#fff" />
            <path d="M-2-4L1-6V5" fill="none" stroke="#e4736e" strokeWidth="2" />
          </svg>
          <span className="ml-[13px] text-[41.500px] font-medium text-[#333]">人气榜</span>
          <svg className="ml-[13px] h-[26px] w-[16px]" viewBox="0 0 16 26" fill="none" stroke="#aaa" strokeWidth="2.500">
            <path d="M2 2l12 11L2 24" />
          </svg>
        </div>
        <div className="relative -mt-[11px] whitespace-nowrap text-[35.800px] leading-[48px] text-[#666]">
          A股市场排名第<b className="text-[#e04a17]">49</b>名
        </div>
      </div>

      <div className="relative h-[300px] w-[499px] shrink-0 overflow-hidden rounded-[24px] bg-[#fff8f5]">
        <svg className="absolute left-0 top-0 h-[136px] w-full" viewBox="0 0 499 136">
          <path d="M257 0H499V136H270z" fill="#fdf1ee" />
          <path d="M302 22h60l13 12q16-13 45-13q50 0 79 24v91H310z" fill="#fef6f3" />
          <text x="318" y="126" fontSize="118" fontWeight="900" fontStyle="italic" fill="#fce9e6" textLength="170" lengthAdjust="spacingAndGlyphs">
            VS
          </text>
        </svg>
        <div className="relative flex h-[112px] items-center pl-[24px]">
          <svg className="size-[48px]" viewBox="-24 -24 48 48">
            <circle r="24" fill="url(#rank)" />
            <text y="11" fontSize="30" fontWeight="900" fontStyle="italic" textAnchor="middle" fill="#fff" textLength="29" lengthAdjust="spacingAndGlyphs">
              VS
            </text>
          </svg>
          <span className="ml-[12px] text-[41.500px] font-medium text-[#333]">多空看盘</span>
        </div>
        {/* vote bar, cut by the bottom bar */}
        <div className="relative mx-[25px] -mt-[10px] flex h-[90px] overflow-hidden rounded-full border-[5px] border-white bg-white text-[35px] leading-[60px]">
          <div className="flex w-[219px] gap-[20px] bg-[#fddedb] pl-[10px] text-[#dc4717]">
            <span className="mt-[9px] size-[82px] rounded-full bg-white" />
            看涨
          </div>
          <div className="ml-[6px] flex flex-1 justify-end gap-[15px] bg-[#d6efdc] pr-[8px] text-[#3fae62]">
            看跌
            <span className="mt-[9px] size-[82px] rounded-full bg-white" />
          </div>
        </div>
      </div>
    </div>
  );
}

function NavItem({ label, children }: { label: string; children: ReactNode }) {
  return (
    <div className="flex w-[201.500px] flex-col items-center pt-[6px]">
      <svg className="h-[66px] w-[70px]" viewBox="-35 -33 70 66" fill="none" stroke="#666" strokeWidth="3">
        {children}
      </svg>
      <span className="mt-[11px] text-[35.500px] leading-[50px]">{label}</span>
    </div>
  );
}

function BottomNav() {
  return (
    <footer className="flex h-[177px] border-t-2 border-[#d9dce1] bg-[#f7f8fb] text-[#666]">
      <div className="flex w-[275px] flex-col items-center pt-[9px]">
        <svg className="h-[8px] w-[22px]" viewBox="0 0 22 8">
          <path d="M0 8L11 0l11 8z" fill="#777" />
        </svg>
        <span className="mt-[11px] text-[39px] leading-[44px] text-[#109c10]">3056.18</span>
        <div className="ml-[33px] mt-[4px] flex w-[227px] shrink-0 items-center justify-between text-[35.500px] leading-[50px]">
          <span>创业</span>
          <span className="text-[36px] text-[#109c10]">-0.89%</span>
        </div>
      </div>
      <NavItem label="交易">
        <path d="M-16-22A27.500 27.500 0 0 1 23 15.500M16.500 22A27.500 27.500 0 0 1-23-14.500" />
        <path d="M-32-9l9-5 .5 9M32 9l-9 6-1-9" />
        <path d="M-9.500-14L0-2.500 9.500-14M0-2.500V15M-10-1.500H10M-10 6.500H10" />
      </NavItem>
      <NavItem label="发帖">
        <path d="M12-26H-20a5.500 5.500 0 0 0-5.500 5.500V20a5.500 5.500 0 0 0 5.500 5.500H20a5.500 5.500 0 0 0 5.500-5.500V-10" />
        <path d="M-9 8l3-9L16-21l5 5L1 3.500zM18-23l3.500-3.500q2.500-1.500 4.500.5t.5 4.500L23-18z" fill="#666" stroke="none" />
      </NavItem>
      <NavItem label="功能">
        <rect x="-25" y="-25" width="22" height="22" rx="3.500" />
        <rect x="-25" y="3" width="22" height="22" rx="3.500" />
        <rect x="2" y="3" width="22" height="22" rx="3.500" />
        <rect x="-9" y="-9" width="18" height="18" rx="3" transform="translate(13 -13.500) rotate(45)" />
      </NavItem>
      <NavItem label="设自选">
        <circle r="27" strokeWidth="2.500" />
        <g fill="#666" stroke="none">
          <circle cx="-12" r="3.200" />
          <circle r="3.200" />
          <circle cx="12" r="3.200" />
        </g>
      </NavItem>
    </footer>
  );
}

export default function App() {
  return (
    <div className="h-[2400px] w-[1080px] overflow-hidden bg-white font-[Roboto,'Noto_Sans_CJK_SC',sans-serif]">
      <StatusBar />
      <Header />
      <Quote />
      <Notice />
      <ChartTabs />
      <Legend />
      <PriceChart />
      <MacdHeader />
      <MacdChart />
      <Dates />
      <Banner />
      <SectionTabs />
      <Cards />
      <BottomNav />
    </div>
  );
}
